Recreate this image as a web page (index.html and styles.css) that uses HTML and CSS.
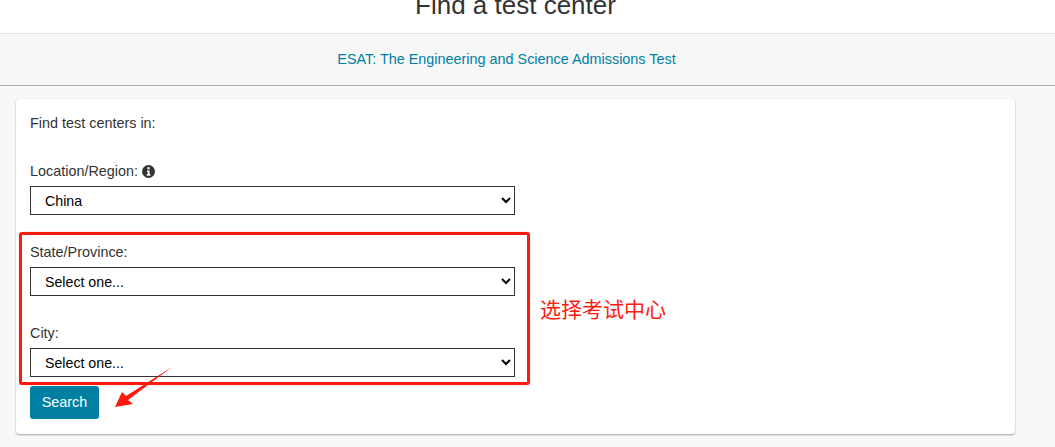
FILE: index.html
```html
<!DOCTYPE html>
<html lang="en">
<head>
<meta charset="utf-8">
<title>Find a test center</title>
<link rel="stylesheet" href="styles.css">
</head>
<body>
<header class="top">
  <h1 class="title">Find a test center</h1>
</header>
<div class="band"><a class="band-link" href="#">ESAT: The Engineering and Science Admissions Test</a></div>
<main class="card">
  <p class="intro">Find test centers in:</p>
  <div class="field field-first">
    <label class="label" for="loc">Location/Region:
      <svg class="info" viewBox="0 0 12 12" width="13" height="13" aria-hidden="true"><circle cx="6" cy="6" r="6" fill="#333"/><rect x="5" y="2" width="2" height="2" fill="#fff"/><path d="M4.6 5h2.4v3.4h.7V10H4.4V8.4h.8V6.2h-.6z" fill="#fff"/></svg>
    </label>
    <select id="loc" class="select"><option>China</option></select>
  </div>
  <div class="field field-state">
    <label class="label" for="state">State/Province:</label>
    <select id="state" class="select"><option>Select one...</option></select>
  </div>
  <div class="field field-city">
    <label class="label" for="city">City:</label>
    <select id="city" class="select"><option>Select one...</option></select>
  </div>
  <button class="search" type="button">Search</button>
  <div class="mark-box"></div>
  <span class="mark-text">选择考试中心</span>
  <svg class="mark-arrow" viewBox="0 0 60 42" width="60" height="42" aria-hidden="true"><path d="M58 1 L14 34 L19 38 L1 41 L8 26 L12 30 Z" fill="#ff1a0f"/></svg>
</main>
```

FILE: styles.css
```css
* { box-sizing: border-box; }
html, body { margin: 0; height: 447px; overflow: hidden; }
body {
  background: #f8f8f8;
  font-family: "Liberation Sans", Arial, sans-serif;
  font-size: 14.4px;
  color: #333;
}
.top { background: #fff; height: 33px; overflow: hidden; text-align: center; padding-right: 24px; }
.title {
  margin: -9px 0 0;
  font-size: 26px;
  font-weight: 400;
  line-height: 28px;
  color: #333;
}
.band {
  height: 53px;
  background: #f7f7f7;
  border-top: 1px solid #e4e4e4;
  border-bottom: 1px solid #ababab;
  text-align: center;
  padding: 17px 42px 0 0;
  line-height: 16px;
}
.band-link { color: #007fa3; text-decoration: none; }
.card {
  position: relative;
  margin: 13px 40px 0 16px;
  height: 335px;
  background: #fff;
  border-radius: 4px;
  box-shadow: 0 1px 2px rgba(0,0,0,.35);
  padding: 16px 14px 0;
}
.intro { margin: 0; line-height: 16px; }
.field { display: flex; flex-direction: column; align-items: flex-start; }
.field-first { margin-top: 32px; }
.field-state { margin-top: 29px; }
.field-city { margin-top: 29px; }
.label { line-height: 16px; display: flex; align-items: center; gap: 4px; margin-bottom: 7px; }
.info { flex: none; }
.select {
  width: 485px;
  height: 29px;
  border: 1px solid #333;
  border-radius: 0;
  background: #fff;
  color: #000;
  padding: 0 10px;
  font-family: inherit;
  font-size: 14.2px;
}
.search {
  display: block;
  margin-top: 9px;
  width: 69px;
  height: 33px;
  border: 0;
  border-radius: 3px;
  background: #007fa3;
  color: #fff;
  font-family: inherit;
  font-size: 14.4px;
  padding: 0 0 2px;
}
.mark-box {
  position: absolute;
  left: 3px;
  top: 133px;
  width: 511px;
  height: 153px;
  border: 3px solid #ff1a0f;
  border-radius: 3px;
  box-shadow: 0 0 1px rgba(255, 26, 15, .6);
}
.mark-text {
  position: absolute;
  left: 524px;
  top: 196px;
  font-family: "Noto Sans CJK SC", sans-serif;
  font-size: 21px;
  line-height: 26px;
  color: #ff1a0f;
  white-space: nowrap;
}
.mark-arrow { position: absolute; left: 98px; top: 267px; }
```
